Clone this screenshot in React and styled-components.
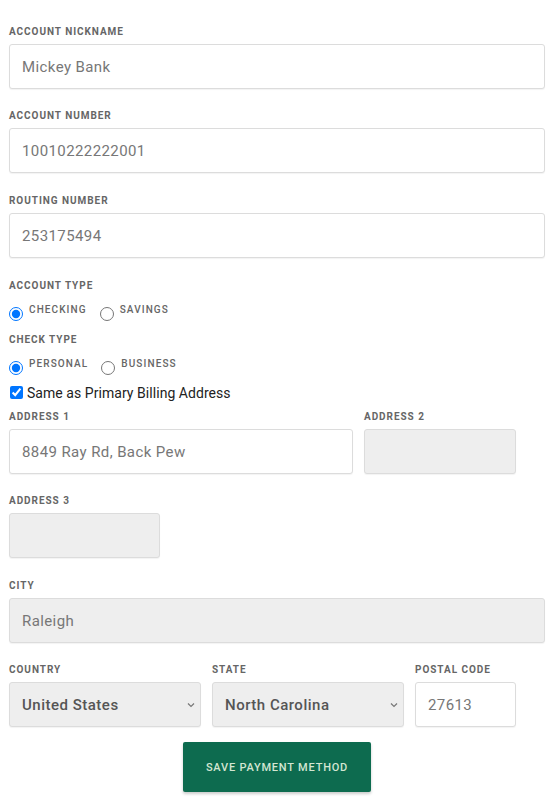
import React from "react";
import styled, { createGlobalStyle } from "styled-components";

const Global = createGlobalStyle`
  html, body { margin: 0; padding: 0; background: #fff; }
  body { font-family: Roboto, "Liberation Sans", Arial, sans-serif; }
  * { box-sizing: border-box; }
`;

const Form = styled.form`
  width: 556px;
  padding: 26px 11px 8px 9px;
  display: flex;
  flex-direction: column;
`;

const Field = styled.div`
  display: flex;
  flex-direction: column;
  margin-bottom: ${(p) => (p.$mb != null ? p.$mb : 21)}px;
`;

const Label = styled.label`
  display: block;
  font-size: 10px;
  line-height: 12px;
  font-weight: 700;
  letter-spacing: 0.95px;
  color: #666;
  text-transform: uppercase;
  margin-bottom: ${(p) => (p.$mb != null ? p.$mb : 6)}px;
`;

const Input = styled.input`
  width: 100%;
  height: 45px;
  border: 1px solid #dcdcdc;
  border-radius: 3px;
  background: ${(p) => (p.disabled ? "#eee" : "#fff")};
  box-shadow: 0 1px 1px rgba(0, 0, 0, 0.05);
  padding: 0 12px;
  font-family: Roboto, "Liberation Sans", Arial, sans-serif;
  font-size: 15px;
  letter-spacing: 0.4px;
  color: #777;
  outline: none;
  &:disabled { color: #777; -webkit-text-fill-color: #777; opacity: 1; }
`;

const Row = styled.div`
  display: grid;
  grid-template-columns: ${(p) => p.$cols};
  column-gap: 11px;
`;

const RadioRow = styled.div`
  display: flex;
  align-items: flex-start;
  height: 16px;
  margin-bottom: ${(p) => p.$mb}px;
`;

const RadioOption = styled.label`
  display: flex;
  align-items: flex-start;
  margin-right: 12px;
  font-size: 10px;
  line-height: 12px;
  font-weight: 500;
  letter-spacing: 1.1px;
  color: #666;
  cursor: pointer;
`;

const Radio = styled.input.attrs({ type: "radio" })`
  width: 14px;
  height: 14px;
  margin: 3px 6px 0 ${(p) => (p.$ml != null ? p.$ml : 0)}px;
  accent-color: #0075ff;
`;

const CheckRow = styled.label`
  display: flex;
  align-items: flex-start;
  font-size: 14px;
  line-height: 18px;
  letter-spacing: 0.05px;
  color: #222;
  margin-bottom: 9px;
`;

const Check = styled.input.attrs({ type: "checkbox" })`
  width: 13px;
  height: 13px;
  margin: 2px 4px 0 1px;
  accent-color: #0075ff;
`;

const SelectWrap = styled.div`
  position: relative;
  width: 100%;
`;

const Select = styled.select`
  appearance: none;
  -webkit-appearance: none;
  width: 100%;
  height: 45px;
  border: 1px solid #dcdcdc;
  border-radius: 3px;
  background: #eee;
  box-shadow: 0 1px 1px rgba(0, 0, 0, 0.05);
  padding: 0 12px;
  font-family: Roboto, "Liberation Sans", Arial, sans-serif;
  font-size: 15px;
  font-weight: 500;
  letter-spacing: 0.5px;
  color: #555;
  outline: none;
`;

const Chevron = styled.svg`
  position: absolute;
  right: 6px;
  top: 20px;
  width: 8px;
  height: 6px;
  pointer-events: none;
`;

const ButtonBar = styled.div`
  display: flex;
  justify-content: center;
  margin-top: 15px;
`;

const SaveButton = styled.button`
  width: 188px;
  height: 50px;
  border: none;
  border-radius: 2px;
  background: #0d6b4f;
  color: #d3e6d2;
  font-family: Roboto, "Liberation Sans", Arial, sans-serif;
  font-size: 11px;
  font-weight: 500;
  letter-spacing: 0.8px;
  text-transform: uppercase;
  box-shadow: 0 2px 3px rgba(0, 0, 0, 0.2);
  cursor: pointer;
`;

function SelectBox({ value, options }) {
  return (
    <SelectWrap>
      <Select defaultValue={value}>
        {options.map((o) => (
          <option key={o}>{o}</option>
        ))}
      </Select>
      <Chevron viewBox="0 0 8 6">
        <path d="M1 1.5 L4 4.5 L7 1.5" fill="none" stroke="#777" strokeWidth="1.2" />
      </Chevron>
    </SelectWrap>
  );
}

export default function App() {
  return (
    <>
      <Global />
      <Form onSubmit={(e) => e.preventDefault()}>
        <Field>
          <Label>Account Nickname</Label>
          <Input defaultValue="Mickey Bank" />
        </Field>
        <Field $mb={22}>
          <Label>Account Number</Label>
          <Input defaultValue="10010222222001" />
        </Field>
        <Field $mb={22}>
          <Label>Routing Number</Label>
          <Input defaultValue="253175494" />
        </Field>

        <Label $mb={12}>Account Type</Label>
        <RadioRow $mb={14}>
          <RadioOption>
            <Radio name="acct" defaultChecked />
            CHECKING
          </RadioOption>
          <RadioOption>
            <Radio name="acct" $ml={1} />
            SAVINGS
          </RadioOption>
        </RadioRow>

        <Label $mb={12}>Check Type</Label>
        <RadioRow $mb={10}>
          <RadioOption>
            <Radio name="check" defaultChecked />
            PERSONAL
          </RadioOption>
          <RadioOption>
            <Radio name="check" $ml={1} />
            BUSINESS
          </RadioOption>
        </RadioRow>

        <CheckRow>
          <Check defaultChecked />
          Same as Primary Billing Address
        </CheckRow>

        <Row $cols="344px 152px">
          <Field>
            <Label>Address 1</Label>
            <Input defaultValue="8849 Ray Rd, Back Pew" />
          </Field>
          <Field>
            <Label>Address 2</Label>
            <Input disabled />
          </Field>
        </Row>

        <Row $cols="151px">
          <Field $mb={22}>
            <Label>Address 3</Label>
            <Input disabled />
          </Field>
        </Row>

        <Field>
          <Label>City</Label>
          <Input disabled defaultValue="Raleigh" />
        </Field>

        <Row $cols="192px 192px 101px">
          <Field $mb={0}>
            <Label>Country</Label>
            <SelectBox value="United States" options={["United States", "Canada"]} />
          </Field>
          <Field $mb={0}>
            <Label>State</Label>
            <SelectBox value="North Carolina" options={["North Carolina", "South Carolina"]} />
          </Field>
          <Field $mb={0}>
            <Label>Postal Code</Label>
            <Input defaultValue="27613" />
          </Field>
        </Row>

        <ButtonBar>
          <SaveButton type="submit">Save Payment Method</SaveButton>
        </ButtonBar>
      </Form>
    </>
  );
}
